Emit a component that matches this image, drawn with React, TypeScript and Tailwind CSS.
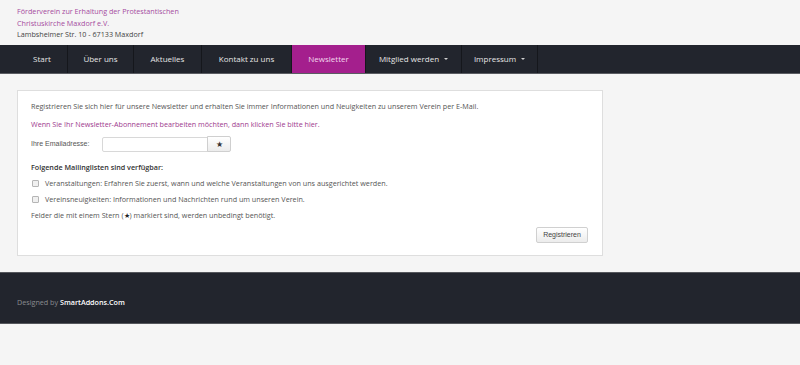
import React from "react";

const Caret = () => (
  <span className="inline-block ml-[5px] align-middle w-0 h-0 border-l-[2px] border-r-[2px] border-t-[2.5px] border-l-transparent border-r-transparent border-t-[#cfcfcf]" />
);

export default function App() {
  const nav = [
    { label: "Start", w: "w-[51px]" },
    { label: "Über uns", w: "w-[66px]" },
    { label: "Aktuelles", w: "w-[68px]" },
    { label: "Kontakt zu uns", w: "w-[90px]" },
    { label: "Newsletter", w: "w-[74px]", active: true },
    { label: "Mitglied werden", w: "w-[96px]", caret: true },
    { label: "Impressum", w: "w-[76px]", caret: true },
  ];
  return (
    <div className="min-h-[365px] bg-[#f5f5f5] text-[#555]" style={{ fontFamily: '"Open Sans", sans-serif' }}>
      {/* Header */}
      <div className="h-[45px] px-[17px] pt-[6px] text-[7.2px] leading-[11.5px]">
        <div className="text-[#a54ca0]">Förderverein zur Erhaltung der Protestantischen</div>
        <div className="text-[#a54ca0]">Christuskirche Maxdorf e.V.</div>
        <div className="text-[#444]">Lambsheimer Str. 10 - 67133 Maxdorf</div>
      </div>

      {/* Nav */}
      <div className="h-[29px] bg-[#22252d] border-b border-[#5a5c62] pl-[17px] flex">
        {nav.map((n) => (
          <div
            key={n.label}
            className={`${n.w} h-[28px] flex items-center justify-center text-[8px] border-r border-[#15171c] ${
              n.active ? "bg-[#a41f8d] text-[#f3d8ee]" : "text-[#e6e6e6]"
            }`}
          >
            {n.label}
            {n.caret && <Caret />}
          </div>
        ))}
      </div>

      {/* Content box */}
      <div className="px-[17px] pt-[16px] pb-[16px]">
        <div className="w-[586px] h-[166px] bg-white border border-[#dedede] px-[13px] pt-[10px] text-[7.2px] text-[#555]">
          <div className="leading-[11px]">
            Registrieren Sie sich hier für unsere Newsletter und erhalten Sie immer Informationen und Neuigkeiten zu unserem Verein per E-Mail.
          </div>
          <div className="leading-[11px] mt-[7px] text-[#9e3a8e]">
            Wenn Sie Ihr Newsletter-Abonnement bearbeiten möchten, dann klicken Sie bitte hier.
          </div>
          <div className="flex items-center mt-[6px] h-[16px]">
            <div className="w-[71px] text-[7px]" style={{ fontFamily: '"Liberation Sans", Arial, sans-serif' }}>
              Ihre Emailadresse:
            </div>
            <div className="w-[106px] h-[15px] border border-[#d8d8d8] rounded-l-[2px] bg-white" />
            <div className="w-[24px] h-[16px] border border-[#cfcfcf] rounded-r-[2px] bg-gradient-to-b from-white to-[#ececec] flex items-center justify-center text-[8px] text-[#333] -ml-px">
              ★
            </div>
          </div>
          <div className="mt-[10px] leading-[11px] font-semibold text-[#333]">
            Folgende Mailinglisten sind verfügbar:
          </div>
          <div className="mt-[5px] flex items-center leading-[11px]">
            <span className="w-[7px] h-[7px] border border-[#b5b5b5] rounded-[1px] bg-[#f0f0f0] mr-[6px] ml-px" />
            Veranstaltungen: Erfahren Sie zuerst, wann und welche Veranstaltungen von uns ausgerichtet werden.
          </div>
          <div className="mt-[5px] flex items-center leading-[11px]">
            <span className="w-[7px] h-[7px] border border-[#b5b5b5] rounded-[1px] bg-[#f0f0f0] mr-[6px] ml-px" />
            Vereinsneuigkeiten: Informationen und Nachrichten rund um unseren Verein.
          </div>
          <div className="mt-[5px] leading-[11px]">
            Felder die mit einem Stern (<span className="text-[#222]">★</span>) markiert sind, werden unbedingt benötigt.
          </div>
          <div className="flex justify-end mt-[6px] pr-px">
            <div
              className="w-[52px] h-[16px] border border-[#d0d0d0] rounded-[2px] bg-gradient-to-b from-white to-[#ececec] flex items-center justify-center text-[7px] text-[#444]"
              style={{ fontFamily: '"Liberation Sans", Arial, sans-serif' }}
            >
              Registrieren
            </div>
          </div>
        </div>
      </div>

      {/* Footer */}
      <div className="h-[52px] bg-[#22252d] border-t border-b border-[#55575c] px-[17px] flex items-center pt-[8px] text-[7.2px]">
        <span className="text-[#8a8c90]">Designed by&nbsp;</span>
        <span className="text-white font-semibold">SmartAddons.Com</span>
      </div>
    </div>
  );
}
